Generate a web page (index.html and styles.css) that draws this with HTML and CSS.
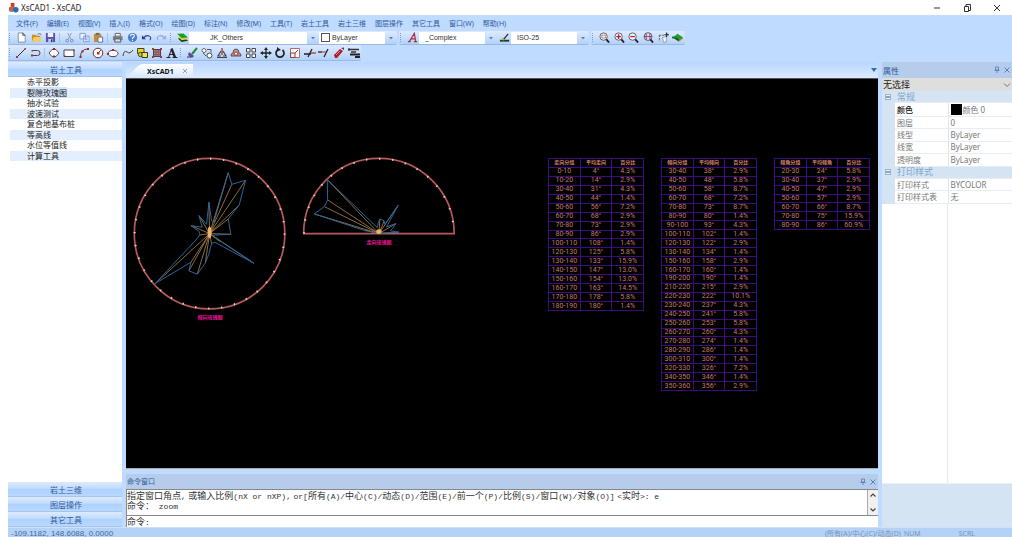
FILE: index.html
```html
<!DOCTYPE html>
<html lang="zh-CN">
<head>
<meta charset="utf-8">
<title>XsCAD1 - XsCAD</title>
<link rel="stylesheet" href="styles.css">
</head>
<body>
<div class="app">
  <header class="titlebar">
    <svg class="logo" viewBox="0 0 12 12"><path d="M3 1h4v5H3z" fill="#c8402c"/><path d="M1 6l4-2 3 3-3 4-4-1z" fill="#d8584a"/><circle cx="8.500" cy="8.500" r="3" fill="#2f68b8"/><path d="M1 9l3-1 2 2-2 1z" fill="#5c9a50"/></svg>
    <h1 class="title">XsCAD1 - XsCAD</h1>
    <div class="winbuttons">
      <button aria-label="最小化"><svg viewBox="0 0 12 12"><path d="M3 6h6" stroke="#333"/></svg></button>
      <button aria-label="还原"><svg viewBox="0 0 12 12"><path d="M3.500 4.500h4v5h-4zM5 4.500v-2h4.500v6H8" fill="none" stroke="#333"/></svg></button>
      <button aria-label="关闭"><svg viewBox="0 0 12 12"><path d="M3 3l6 6M9 3l-6 6" stroke="#333"/></svg></button>
    </div>
  </header>

  <nav class="menu">
    <button>文件(F)</button><button>编辑(E)</button><button>视图(V)</button><button>插入(I)</button><button>格式(O)</button><button>绘图(D)</button><button>标注(N)</button><button>修改(M)</button><button>工具(T)</button><button>岩土工具</button><button>岩土三维</button><button>图层操作</button><button>其它工具</button><button>窗口(W)</button><button>帮助(H)</button>
  </nav>

  <div class="toolrow">
    <div class="toolbar">
      <i class="grip"></i>
      <div class="tools t3">
        <button aria-label="新建"><svg viewBox="0 0 12 12"><path d="M2.500 1h5L10 3.500V11H2.500z" fill="#fff" stroke="#6a7690" stroke-width=".8"/><path d="M7.500 1v2.500H10" fill="none" stroke="#334"/></svg></button>
        <button aria-label="打开"><svg viewBox="0 0 12 12"><path d="M1 3h4l1 1h4v6H1z" fill="#c98f2c"/><path d="M3 5.500h9L10 10.500H1z" fill="#f6cb63"/><path d="M7 2.500l3-1 1 2" fill="none" stroke="#5b7bb5"/></svg></button>
        <button aria-label="保存"><svg viewBox="0 0 12 12"><path d="M1 1h10v10H1z" fill="#5652b4"/><path d="M3 1h6v4.500H3z" fill="#eef0ff"/><path d="M3.500 7.500h5V11h-5z" fill="#c4c8ec"/><path d="M6.500 8h1.500v3H6.500z" fill="#302c80"/></svg></button>
      </div>
      <i class="sep"></i>
      <div class="tools t3">
        <button aria-label="剪切"><svg viewBox="0 0 12 12"><path d="M4 1l3.500 7M8 1L4.500 8" stroke="#8799bb"/><circle cx="3.500" cy="9.500" r="1.500" fill="none" stroke="#7189bd"/><circle cx="8.500" cy="9.500" r="1.500" fill="none" stroke="#7189bd"/></svg></button>
        <button aria-label="复制"><svg viewBox="0 0 12 12"><path d="M1 1.500h6v6H1zM5 4.500h6v6H5z" fill="#eaf2ff" stroke="#7c98cf"/><path d="M6.500 6.500h3M6.500 8.500h3" stroke="#7c98cf"/></svg></button>
        <button aria-label="粘贴"><svg viewBox="0 0 12 12"><path d="M1 2h8v9H1z" fill="#c98d33"/><path d="M3 1h4v2H3z" fill="#665"/><path d="M5.500 5.500h5v5.500h-5z" fill="#fff" stroke="#5c6c9a"/></svg></button>
      </div>
      <i class="sep"></i>
      <div class="tools t4">
        <button aria-label="打印"><svg viewBox="0 0 12 12"><path d="M3.500 1.500h5.500v3H3.500z" fill="#fff" stroke="#555"/><path d="M1 4.500h10.500V9H1z" fill="#7b7f8c"/><path d="M3 7.500h6.500V11H3z" fill="#ddd" stroke="#555"/></svg></button>
        <button aria-label="帮助"><svg viewBox="0 0 12 12"><circle cx="6" cy="6" r="5" fill="#4a7bcc"/><path d="M4 4.500q0-2 2-2t2 1.700Q8 5.500 6 6.500V8M6 8.800v1" fill="none" stroke="#fff" stroke-width="1.200"/></svg></button>
        <button aria-label="撤消"><svg viewBox="0 0 12 12"><path d="M1 3.500V8h4.500z" fill="#223ba5"/><path d="M3 6q3-3 6-1.500T9.500 9" fill="none" stroke="#223ba5" stroke-width="1.200"/></svg></button>
        <button aria-label="重做"><svg viewBox="0 0 12 12"><path d="M11 3.500V8H6.500z" fill="#9ab0dc"/><path d="M9 6Q6 3 3 4.500T2.500 9" fill="none" stroke="#8fa6d8" stroke-width="1.200"/></svg></button>
      </div>
      <i class="grip"></i>
      <div class="tools t1"><button aria-label="图层"><svg viewBox="0 0 12 12"><path d="M1 7l7-1 4 3.500-7 1.500z" fill="#123c1c"/><path d="M1 4.500l7-.5 4 4-7 1z" fill="#d6d634"/><path d="M0 2l7-.5L12 6 5 6.500z" fill="#19a030"/></svg></button></div>
      <label class="combo wide"><select class="layer" aria-label="图层"><option>JK_Others</option></select><svg viewBox="0 0 6 6"><path d="M1 2h4L3 4.500z" fill="#5b7fb8"/></svg></label>
      <label class="combo swatched"><i class="swatch"></i><select aria-label="颜色"><option>ByLayer</option></select><svg viewBox="0 0 6 6"><path d="M1 2h4L3 4.500z" fill="#5b7fb8"/></svg></label>
    </div>
    <div class="toolbar">
      <i class="grip"></i>
      <div class="tools t1"><button aria-label="文字样式"><svg viewBox="0 0 12 12"><path d="M1 10.500h3M7.500 10.500H11M2.500 10.500L8 1.500l1.500 9M4.500 7.500h4.500" fill="none" stroke="#a83248" stroke-width="1.300"/></svg></button></div>
      <label class="combo"><select aria-label="文字样式"><option>_Complex</option></select><svg viewBox="0 0 6 6"><path d="M1 2h4L3 4.500z" fill="#5b7fb8"/></svg></label>
      <div class="tools t1"><button aria-label="标注样式"><svg viewBox="0 0 12 12"><path d="M1 9.500h10" stroke="#123c2c" stroke-width="2"/><path d="M5 8l5-6" stroke="#333" stroke-width="1.500"/><path d="M3 6l3 3H3z" fill="#cabb30"/></svg></button></div>
      <label class="combo"><select aria-label="标注样式"><option>ISO-25</option></select><svg viewBox="0 0 6 6"><path d="M1 2h4L3 4.500z" fill="#5b7fb8"/></svg></label>
    </div>
    <div class="toolbar">
      <i class="grip"></i>
      <div class="tools t6">
        <button aria-label="窗口缩放"><svg viewBox="0 0 12 12"><circle cx="5" cy="5" r="4" fill="#f2f4fb" stroke="#555a6a"/><path d="M8 8l3 3.500" stroke="#222" stroke-width="2"/><path d="M3 3.500h4v3H3z" fill="none" stroke="#a66" stroke-width=".8"/></svg></button>
        <button aria-label="放大"><svg viewBox="0 0 12 12"><circle cx="5" cy="5" r="4" fill="#f2f4fb" stroke="#555a6a"/><path d="M8 8l3 3.500" stroke="#222" stroke-width="2"/><path d="M5 2.500v5M2.500 5h5" stroke="#c01c30" stroke-width="1.400"/></svg></button>
        <button aria-label="缩小"><svg viewBox="0 0 12 12"><circle cx="5" cy="5" r="4" fill="#f2f4fb" stroke="#555a6a"/><path d="M8 8l3 3.500" stroke="#222" stroke-width="2"/><path d="M2.500 5h5" stroke="#c01c30" stroke-width="1.400"/></svg></button>
        <button aria-label="全图"><svg viewBox="0 0 12 12"><circle cx="5.500" cy="5" r="4.300" fill="#d8dcf0" stroke="#555a6a"/><path d="M8 8l3 3.500" stroke="#222" stroke-width="2"/><path d="M3.500 1.500v7M7.500 1.500v7M1 5h9" stroke="#8c4064"/></svg></button>
        <button aria-label="平移"><svg viewBox="0 0 12 12"><path d="M1.500 3.500h6M1.500 3.500V10" fill="none" stroke="#555" stroke-dasharray="2 1"/><path d="M5 6l4-1v6H6z" fill="#fff" stroke="#777" stroke-width=".7"/><path d="M9.500 .500v5M7 3h5" stroke="#223" stroke-width="1.200"/></svg></button>
        <button aria-label="三维"><svg viewBox="0 0 12 12"><path d="M1 6l5-4 6 4-5 4z" fill="#1f9d2c"/><path d="M1 6l6 4v-3z" fill="#115a1c"/><path d="M0 5h4v2H0z" fill="#226b28"/><path d="M7 10l5-4v1l-5 4z" fill="#c56a22"/></svg></button>
      </div>
    </div>
  </div>

  <div class="toolrow second">
    <div class="toolbar">
      <i class="grip"></i>
      <div class="tools t2">
        <button aria-label="直线"><svg viewBox="0 0 12 12"><path d="M2 10l8-8" stroke="#333"/><path d="M1 9h2v2H1zM9.500 1h1.500v1.500H9.500z" fill="#a33"/></svg></button>
        <button aria-label="多段线"><svg viewBox="0 0 12 12"><path d="M2 3.500h5.500a2.500 2.500 0 010 5H2" fill="none" stroke="#444"/><path d="M1 7.500h2v2H1zM1.500 3h1.500v1.500H1.500z" fill="#a33"/></svg></button>
      </div>
      <i class="sep"></i>
      <div class="tools t9">
        <button aria-label="多边形"><svg viewBox="0 0 12 12"><path d="M4 2.500h4L11 6 8 9.500H4L1 6z" fill="#fff" stroke="#555"/><path d="M5 1h2v2H5zM5 8.500h2v2H5z" fill="#a22"/></svg></button>
        <button aria-label="矩形"><svg viewBox="0 0 12 12"><path d="M1 3h10v6.500H1z" fill="#fff" stroke="#444"/><path d="M1 8.500h1.500V10H1zM10 2.500h1.500V4H10z" fill="#a22"/></svg></button>
        <button aria-label="圆弧"><svg viewBox="0 0 12 12"><path d="M2.500 10Q2.500 2 10 2" fill="none" stroke="#444"/><path d="M1.500 9h2v2h-2zM9 1h2v2H9zM3.500 3.500h2v2h-2z" fill="#a22"/></svg></button>
        <button aria-label="圆"><svg viewBox="0 0 12 12"><circle cx="6" cy="6" r="4.800" fill="#fff" stroke="#633"/><path d="M6 6l3-3" stroke="#a22"/><path d="M5 5h2.500v2.500H5z" fill="#c22"/></svg></button>
        <button aria-label="椭圆"><svg viewBox="0 0 12 12"><ellipse cx="6" cy="6.500" rx="5" ry="3.200" fill="#fff" stroke="#444"/><path d="M5 2h2v2H5zM0 6h2v2H0z" fill="#a22"/></svg></button>
        <button aria-label="样条曲线"><svg viewBox="0 0 12 12"><path d="M1 9Q2 2.500 5 5t6-2" fill="none" stroke="#444"/></svg></button>
        <button aria-label="插入块"><svg viewBox="0 0 12 12"><path d="M1.500 1.500h6.500v5H1.500z" fill="#e8d620" stroke="#443"/><circle cx="4.500" cy="7.500" r="2.200" fill="#d8c820" stroke="#443"/><path d="M6 5.500h5.500v5H6z" fill="#f2e450" stroke="#333"/></svg></button>
        <button aria-label="填充"><svg viewBox="0 0 12 12"><path d="M2.500 2.500h7v7h-7z" fill="#a07c86" stroke="#4c3c44"/><path d="M2.500 5h7M2.500 7.500h7M5 2.500v7M7.500 2.500v7" stroke="#844" stroke-width=".6"/><path d="M1 1h2v2H1zM9 1h2v2H9zM1 9h2v2H1zM9 9h2v2H9z" fill="#a34"/></svg></button>
        <button aria-label="文字"><svg viewBox="0 0 12 12"><path d="M.5 10.500h4M6.500 10.500h5M2.500 10.500L5.500 2M3.500 7.500h4" stroke="#222" fill="none"/><path d="M5.500 1.500l3.500 9" stroke="#222" stroke-width="2.300"/></svg></button>
      </div>
      <i class="grip"></i>
      <div class="tools t12">
        <button aria-label="删除"><svg viewBox="0 0 12 12"><path d="M6 7l5-6" stroke="#283" stroke-width="2"/><path d="M3 5l5 4-2 2-4-3z" fill="#5b4a9c"/><path d="M1 10h4" stroke="#333"/></svg></button>
        <button aria-label="复制对象"><svg viewBox="0 0 12 12"><circle cx="3" cy="3.500" r="2" fill="#fff" stroke="#666"/><circle cx="8.500" cy="8.500" r="2.500" fill="#fff" stroke="#444"/><path d="M6 2.500h4v3M2 6l3 3" stroke="#555" fill="none"/></svg></button>
        <button aria-label="镜像"><svg viewBox="0 0 12 12"><path d="M6 1v7M5 4L2 9h3M7 4l3 5H7M1 10.500h10" stroke="#444" stroke-width="1.200" fill="none"/><path d="M5 3h2v5H5z" fill="#b66"/></svg></button>
        <button aria-label="偏移"><svg viewBox="0 0 12 12"><path d="M1 9q0-3 2-3 0-4 3-4t3 4q2 0 2 3z" fill="#d28a96" stroke="#555"/><path d="M4 8q0-3 2-3t2 3z" fill="#fff" stroke="#944"/></svg></button>
        <button aria-label="阵列"><svg viewBox="0 0 12 12"><path d="M1.500 1.500h3.500v3.500H1.500zM7 1.500h3.500v3.500H7zM1.500 7h3.500v3.500H1.500zM7 7h3.500v3.500H7z" fill="#fff" stroke="#444"/></svg></button>
        <button aria-label="移动"><svg viewBox="0 0 12 12"><path d="M6 2v8M2 6h8" stroke="#222" stroke-width="1.300"/><path d="M6 0l2 3H4zM6 12l2-3H4zM0 6l3-2v4zM12 6L9 4v4z" fill="#222"/></svg></button>
        <button aria-label="旋转"><svg viewBox="0 0 12 12"><path d="M8.500 3a4 4 0 11-5 0" fill="none" stroke="#222" stroke-width="1.700"/><path d="M3 0v4.500L7 3z" fill="#222"/></svg></button>
        <button aria-label="缩放"><svg viewBox="0 0 12 12"><path d="M1.500 1.500h9v9h-9z" fill="#fff" stroke="#b66"/><path d="M1.500 6h4.500v4.500H1.500z" fill="#eee" stroke="#844"/><path d="M6 6l3-3" stroke="#844"/></svg></button>
        <button aria-label="修剪"><svg viewBox="0 0 12 12"><path d="M0 7h7M4 10l4-8" stroke="#222" stroke-width="1.300"/><path d="M7 6h5" stroke="#a33" stroke-width="1.300"/></svg></button>
        <button aria-label="延伸"><svg viewBox="0 0 12 12"><path d="M6 10l4-8" stroke="#222" stroke-width="1.300"/><path d="M0 5h4" stroke="#222" stroke-width="1.300"/><path d="M4 5h4" stroke="#a33"/></svg></button>
        <button aria-label="分解"><svg viewBox="0 0 12 12"><path d="M1 8l6-6 3 2-6 7H2z" fill="#b01c24"/><path d="M8 1l3-.5V3z" fill="#444"/><path d="M3 8l4-4" stroke="#e88"/></svg></button>
        <button aria-label="特性匹配"><svg viewBox="0 0 12 12"><path d="M0 2.500h11M3 5h5" stroke="#333" stroke-width="1.500"/><path d="M2 7.500h10M7 10h5" stroke="#222" stroke-width="2"/><path d="M1 1v3" stroke="#333"/></svg></button>
      </div>
    </div>
  </div>

  <main class="workspace">
    <aside class="toolbox">
      <button class="panelbtn">岩土工具</button>
      <ul class="toollist">
        <li>赤平投影</li><li class="alt"><span class="picked">裂隙玫瑰图</span></li><li>抽水试验</li><li class="alt">波速测试</li><li>复合地基布桩</li><li class="alt">等高线</li><li>水位等值线</li><li class="alt">计算工具</li>
      </ul>
      <div class="panelstack">
        <button class="panelbtn">岩土三维</button>
        <button class="panelbtn">图层操作</button>
        <button class="panelbtn">其它工具</button>
      </div>
    </aside>

    <section class="center">
      <div class="tabs">
        <div class="tab"><b>XsCAD1</b><button aria-label="关闭标签"><svg viewBox="0 0 6 6"><path d="M1 1l4 4M5 1L1 5" stroke="#7090c0" stroke-width=".8"/></svg></button></div>
        <button class="tabmenu" aria-label="标签列表"><svg viewBox="0 0 6 6"><path d="M0 1h6L3 5z" fill="#3c68ad"/></svg></button>
      </div>

      <div class="canvas">
        <div class="roses">
          <figure class="rose">
            <svg viewBox="0 0 152 153">
              <g transform="translate(-14 -13) scale(.333)" fill="none">
                <circle cx="269" cy="266" r="226" stroke="#b75a5a" stroke-width="5"/>
                <circle cx="269" cy="266" r="225" stroke="#f0d0c8" stroke-width="6" pathLength="360" stroke-dasharray="1 9"/>
                <path stroke="#a98148" stroke-width="2.500" d="M269 266L325 83M269 266L336 118M269 266L377 106M269 266L358 180M269 266L325 222M269 266L333 268M269 266L402 355M269 266L300 290M269 266L256 355M269 266L232 388M269 266L207 378M269 266L213 352M269 266L106 416M269 266L213 242M269 266L237 212M269 266L267 172M269 266L240 270M269 266L275 296"/>
                <path stroke="#2b659c" stroke-width="3" d="M267 172L275 228 282 232 325 83 336 118 377 106 358 180 325 222 333 268 278 271 300 288 402 355 285 292 275 296 266 330 256 355 232 388 207 378 213 352 106 416 228 285 240 270 238 260 213 242 247 247 237 212 260 238z"/>
                <ellipse cx="269" cy="263" rx="6" ry="18" fill="#ecb36c"/>
              </g>
            </svg>
            <figcaption>倾向玫瑰图</figcaption>
          </figure>
          <figure class="rose">
            <svg viewBox="0 0 152 78">
              <g transform="translate(-13 -13) scale(.333)" fill="none">
                <path d="M41 266a226 226 0 01452 0z" stroke="#b75a5a" stroke-width="5"/>
                <path d="M42 266a225 225 0 01450 0" stroke="#f0d0c8" stroke-width="6" pathLength="180" stroke-dasharray="1 9"/>
                <path stroke="#a98148" stroke-width="2.500" d="M267 266L112 104M267 266L113 165M267 266L103 185M267 266L73 207M267 266L225 256M267 266L270 222M267 266L283 228M267 266L325 181M267 266L318 236M267 266L327 262"/>
                <path stroke="#2b659c" stroke-width="3" d="M267 265L327 262 302 258 318 236 290 246 325 181 285 238 283 228 270 222 265 234 262 248 112 104 113 165 103 185 73 207 225 257z"/>
                <ellipse cx="267" cy="260" rx="8" ry="7" fill="#ecb36c"/>
              </g>
            </svg>
            <figcaption>走向玫瑰图</figcaption>
          </figure>
        </div>
        <div class="stats">
          <table class="stat h17">
            <tr><th>走向分组</th><th>平均走向</th><th>百分比</th></tr>
            <tr><td>0-10</td><td>4°</td><td>4.3%</td></tr>
            <tr><td>10-20</td><td>14°</td><td>2.9%</td></tr>
            <tr><td>30-40</td><td>31°</td><td>4.3%</td></tr>
            <tr><td>40-50</td><td>44°</td><td>1.4%</td></tr>
            <tr><td>50-60</td><td>56°</td><td>7.2%</td></tr>
            <tr><td>60-70</td><td>68°</td><td>2.9%</td></tr>
            <tr><td>70-80</td><td>73°</td><td>2.9%</td></tr>
            <tr><td>80-90</td><td>86°</td><td>2.9%</td></tr>
            <tr><td>100-110</td><td>108°</td><td>1.4%</td></tr>
            <tr><td>120-130</td><td>125°</td><td>5.8%</td></tr>
            <tr><td>130-140</td><td>133°</td><td>15.9%</td></tr>
            <tr><td>140-150</td><td>147°</td><td>13.0%</td></tr>
            <tr><td>150-160</td><td>154°</td><td>13.0%</td></tr>
            <tr><td>160-170</td><td>163°</td><td>14.5%</td></tr>
            <tr><td>170-180</td><td>178°</td><td>5.8%</td></tr>
            <tr><td>180-190</td><td>180°</td><td>1.4%</td></tr>
          </table>
          <table class="stat h26">
            <tr><th>倾向分组</th><th>平均倾向</th><th>百分比</th></tr>
            <tr><td>30-40</td><td>38°</td><td>2.9%</td></tr>
            <tr><td>40-50</td><td>48°</td><td>5.8%</td></tr>
            <tr><td>50-60</td><td>58°</td><td>8.7%</td></tr>
            <tr><td>60-70</td><td>68°</td><td>7.2%</td></tr>
            <tr><td>70-80</td><td>73°</td><td>8.7%</td></tr>
            <tr><td>80-90</td><td>80°</td><td>1.4%</td></tr>
            <tr><td>90-100</td><td>93°</td><td>4.3%</td></tr>
            <tr><td>100-110</td><td>102°</td><td>1.4%</td></tr>
            <tr><td>120-130</td><td>122°</td><td>2.9%</td></tr>
            <tr><td>130-140</td><td>134°</td><td>1.4%</td></tr>
            <tr><td>150-160</td><td>158°</td><td>2.9%</td></tr>
            <tr><td>160-170</td><td>160°</td><td>1.4%</td></tr>
            <tr><td>190-200</td><td>190°</td><td>1.4%</td></tr>
            <tr><td>210-220</td><td>215°</td><td>2.9%</td></tr>
            <tr><td>220-230</td><td>222°</td><td>10.1%</td></tr>
            <tr><td>230-240</td><td>237°</td><td>4.3%</td></tr>
            <tr><td>240-250</td><td>241°</td><td>5.8%</td></tr>
            <tr><td>250-260</td><td>253°</td><td>5.8%</td></tr>
            <tr><td>260-270</td><td>260°</td><td>4.3%</td></tr>
            <tr><td>270-280</td><td>274°</td><td>1.4%</td></tr>
            <tr><td>280-290</td><td>286°</td><td>1.4%</td></tr>
            <tr><td>300-310</td><td>300°</td><td>1.4%</td></tr>
            <tr><td>320-330</td><td>326°</td><td>7.2%</td></tr>
            <tr><td>340-350</td><td>346°</td><td>1.4%</td></tr>
            <tr><td>350-360</td><td>356°</td><td>2.9%</td></tr>
          </table>
          <table class="stat h8">
            <tr><th>倾角分组</th><th>平均倾角</th><th>百分比</th></tr>
            <tr><td>20-30</td><td>24°</td><td>5.8%</td></tr>
            <tr><td>30-40</td><td>37°</td><td>2.9%</td></tr>
            <tr><td>40-50</td><td>47°</td><td>2.9%</td></tr>
            <tr><td>50-60</td><td>57°</td><td>2.9%</td></tr>
            <tr><td>60-70</td><td>66°</td><td>8.7%</td></tr>
            <tr><td>70-80</td><td>75°</td><td>15.9%</td></tr>
            <tr><td>80-90</td><td>86°</td><td>60.9%</td></tr>
          </table>
        </div>
      </div>

      <div class="command">
        <div class="panelhead"><h2>命令窗口</h2><button aria-label="固定"><svg viewBox="0 0 8 8"><path d="M2.500 1h3v3h-3zM1.500 4.500h5M4 4.500V7" fill="none" stroke="#5a7fbc" stroke-width=".9"/></svg></button><button aria-label="关闭"><svg viewBox="0 0 8 8"><path d="M1.500 1.500l5 5M6.500 1.500l-5 5" stroke="#5a7fbc"/></svg></button></div>
        <div class="history">
          <div class="log">
            <p>指定窗口角点<code>,</code> 或输入比例<code>(nX or nXP),</code> <code>or[</code>所有<code>(A)/</code>中心<code>(C)/</code>动态<code>(D)/</code>范围<code>(E)/</code>前一个<code>(P)/</code>比例<code>(S)/</code>窗口<code>(W)/</code>对象<code>(O)]</code> <code>&lt;</code>实时<code>&gt;: e</code></p>
            <p>命令：<code> zoom</code></p>
          </div>
          <div class="scroll">
            <button aria-label="向上"><svg viewBox="0 0 8 8"><path d="M1.500 5.500L4 3l2.500 2.500" fill="none" stroke="#444" stroke-width="1.200"/></svg></button>
            <button aria-label="向下"><svg viewBox="0 0 8 8"><path d="M1.500 2.500L4 5l2.500-2.500" fill="none" stroke="#444" stroke-width="1.200"/></svg></button>
          </div>
        </div>
        <div class="prompt"><label for="cmd">命令<code>:</code></label><input id="cmd" type="text"></div>
      </div>
    </section>

    <aside class="props">
      <div class="panelhead"><h2>属性</h2><button aria-label="固定"><svg viewBox="0 0 8 8"><path d="M2.500 1h3v3h-3zM1.500 4.500h5M4 4.500V7" fill="none" stroke="#5a7fbc" stroke-width=".9"/></svg></button><button aria-label="关闭"><svg viewBox="0 0 8 8"><path d="M1.500 1.500l5 5M6.500 1.500l-5 5" stroke="#5a7fbc"/></svg></button></div>
      <label class="selection"><select aria-label="选择"><option>无选择</option></select><svg viewBox="0 0 8 8"><path d="M1 2.500l3 3 3-3" fill="none" stroke="#666" stroke-width=".9"/></svg></label>
      <table class="proptable">
        <colgroup><col class="c-fold"><col class="c-name"><col></colgroup>
        <tr class="group"><td><i class="fold"></i></td><th colspan="2">常规</th></tr>
        <tr class="active"><td></td><th>颜色</th><td><span class="color"><i class="black"></i>颜色 0</span></td></tr>
        <tr><td></td><th>图层</th><td>0</td></tr>
        <tr><td></td><th>线型</th><td>ByLayer</td></tr>
        <tr><td></td><th>线宽</th><td>ByLayer</td></tr>
        <tr><td></td><th>透明度</th><td>ByLayer</td></tr>
        <tr class="group"><td><i class="fold"></i></td><th colspan="2">打印样式</th></tr>
        <tr><td></td><th>打印样式</th><td>BYCOLOR</td></tr>
        <tr><td></td><th>打印样式表</th><td>无</td></tr>
      </table>
      <div class="blank"></div>
      <div class="hint"></div>
    </aside>
  </main>

  <footer class="status">
    <span class="coords">-109.1182, 148.6088, 0.0000</span>
    <span>(所有(A)/中心(C)/动态(D)</span>
    <span class="num">NUM</span>
    <span class="scrl">SCRL</span>
  </footer>
</div>
</body>
</html>
```
FILE: styles.css
```css
* { box-sizing: border-box; }

body {
  margin: 0;
  padding-left: 8px;
  background: #fff;
  color: #333;
  font: 7px/9px "Noto Sans", "Noto Sans CJK SC", sans-serif;
}

button {
  margin: 0;
  padding: 0;
  border: 0;
  background: none;
  color: inherit;
  font: inherit;
}

svg { display: block; }
h1, h2, p, ul, figure { margin: 0; padding: 0; }
select, input { border: 0; padding: 0; margin: 0; outline: 0; border-radius: 0; font: inherit; appearance: none; }

.app {
  display: flex;
  flex-direction: column;
  height: 100vh;
  background: #bfdbff;
}

/* Title bar and menu */
.titlebar { display: flex; align-items: center; height: 15px; background: #fff; }
.logo { width: 11px; height: 11px; }
.title { flex: 1; padding-left: 2px; font-size: 8px; font-weight: 400; line-height: 12px; color: #222; }
.winbuttons { display: flex; gap: 18px; padding-right: 9px; }
.winbuttons svg { width: 12px; height: 12px; }

.menu { display: flex; gap: 9px; height: 16px; padding-left: 8px; align-items: center; color: #31599a; }

/* Toolbars */
.toolrow { display: flex; gap: 2px; height: 14px; }
.toolrow.second { height: 17px; padding-bottom: 1px; }
.toolbar {
  display: flex;
  align-items: center;
  background: linear-gradient(#dceaff, #c4dcfb 60%, #b4d0f8);
  border-bottom: 1px solid #98b9e8;
  border-radius: 2px;
}
.grip { width: 5px; height: 9px; border-left: 1px dotted #7f9fd0; margin-left: 1px; }
.sep { width: 1px; height: 10px; margin: 0 2px 0 1px; background: #a5c2ea; }
.tools { display: flex; }
.tools button { flex: 1; display: flex; justify-content: center; }
.tools svg { width: 11px; height: 11px; }
.second .tools svg { width: 12px; height: 12px; }
.t1 { width: 14px; }
.t2 { width: 29px; }
.t3 { width: 44px; }
.t4 { width: 59px; }
.t6 { width: 88px; }
.t9 { width: 132px; }
.t12 { width: 176px; }

.combo { display: flex; align-items: center; width: 78px; height: 12px; padding-right: 3px; font-family: "Liberation Sans", sans-serif; }
.combo.wide { width: 130px; }
.combo select { flex: 1; min-width: 0; height: 12px; margin-right: 3px; padding-left: 6px; background: #fff; color: #333; }
.combo .layer { padding-left: 21px; }
.combo svg { width: 6px; height: 6px; }
.combo.swatched { background: linear-gradient(90deg, #fff 66px, transparent 66px); }
.combo.swatched select { padding-left: 2px; }
.swatch { width: 9px; height: 9px; margin-left: 2px; border: 1px solid #555; background: #fff; }

/* Workspace */
.workspace { flex: 1; min-height: 0; display: grid; grid-template-columns: 114px 1fr 131px; }

.toolbox { display: flex; flex-direction: column; background: #fff; min-height: 0; }
.panelbtn {
  width: 100%;
  height: 15px;
  padding-left: 2px;
  color: #31599a;
  font-size: 8px;
  background: linear-gradient(#dceaff, #c3dcff 45%, #aed1ff 50%, #b9d8ff);
  border-bottom: 1px solid #a4c5f0;
}
.toollist { flex: none; height: 84px; display: flex; flex-direction: column; padding-left: 2px; list-style: none; font-size: 8px; line-height: 10px; }
.toollist li { flex: 1; padding-left: 17px; color: #222; }
.toollist .alt { background: #e3efff; }
.picked { background: #d0e3f8; }
.panelstack { display: flex; flex-direction: column; margin-top: auto; }

.center { display: flex; flex-direction: column; min-width: 0; padding: 0 3px 0 4px; }
.tabs { display: flex; align-items: flex-end; justify-content: space-between; height: 16px; background: linear-gradient(#b8d6ff, #dceaff); }
.tab {
  display: flex;
  align-items: center;
  justify-content: space-between;
  width: 67px;
  height: 14px;
  padding: 0 5px 0 21px;
  background: linear-gradient(#fff, #e8f1fe 60%, #d4e5fd);
  clip-path: polygon(0 100%, 12px 15%, 16px 0, 100% 0, 100% 100%);
  color: #111;
}
.tab svg { width: 6px; height: 6px; }
.tabmenu { padding: 0 1px 5px 0; }
.tabmenu svg { width: 6px; height: 6px; }

.canvas {
  flex: 1;
  min-height: 0;
  display: flex;
  justify-content: space-between;
  padding: 79px 8px 0 8px;
  background: #000;
  border-top: 1px solid #555;
  border-bottom: 1px solid #a9a9a9;
}
.roses { display: flex; gap: 17px; align-items: flex-start; }
.rose { width: 152px; }
.rose svg { width: 100%; overflow: visible; }
.rose figcaption { padding-top: 2px; text-align: center; color: #f0149a; font-size: 5px; font-weight: 700; line-height: 8px; }

.stats { display: flex; gap: 17px; align-items: flex-start; }
.stat { width: 96px; border-collapse: collapse; table-layout: fixed; color: #c27a68; font: 7px/7px Roboto, "Noto Sans CJK SC", sans-serif; text-align: center; }
.stat th, .stat td { padding: 0; border: 1px solid #3d0a80; }
.stat th { font-size: 5px; font-weight: 700; color: #d98472; }
.h17 { height: 153px; }
.h26 { height: 233px; }
.h8 { height: 72px; }

/* Panel headings */
.panelhead { display: flex; align-items: center; height: 15px; padding-right: 1px; background: #b5cdea; color: #31599a; }
.panelhead h2 { flex: 1; padding-left: 1px; font-size: 7px; font-weight: 400; }
.panelhead button + button { margin-left: 2px; }
.panelhead svg { width: 8px; height: 8px; }

/* Command window */
.command { padding-top: 5px; }
.command code { font: 8px/9px "Liberation Mono", monospace; white-space: pre; }
.history { display: flex; height: 27px; background: #fff; border: 1px solid #888; border-width: 1px 0 1px 1px; }
.log { flex: 1; min-width: 0; padding-top: 1px; font: 9px/10px "Liberation Sans", "Noto Sans CJK SC", sans-serif; white-space: nowrap; border-right: 1px solid #aaa; }
.scroll { display: flex; flex-direction: column; justify-content: space-between; padding: 1px; background: #f0f0f0; }
.scroll svg { width: 8px; height: 8px; }
.prompt { display: flex; align-items: center; height: 11px; background: #fff; border-left: 1px solid #888; font: 9px/10px "Liberation Sans", "Noto Sans CJK SC", sans-serif; }
.prompt input { flex: 1; height: 10px; background: transparent; }

/* Properties */
.props { display: flex; flex-direction: column; padding-left: 1px; min-height: 0; font-size: 8px; }
.props .panelhead { flex: none; height: 16px; }
.props .panelhead h2 { font-size: 8px; }
.selection { display: flex; align-items: center; height: 13px; padding: 0 1px; background: #dedede; }
.selection select { flex: 1; background: transparent; color: #222; font-size: 9px; }
.selection svg { width: 8px; height: 8px; }
.proptable { height: 113px; border-collapse: collapse; table-layout: fixed; width: 100%; background: #fff; color: #777; line-height: 10px; }
.proptable td, .proptable th { padding: 0 0 0 2px; border-bottom: 1px solid #e6edf5; text-align: left; font-weight: 400; white-space: nowrap; }
.proptable td:first-child { background: #d5e4f3; border: 0; }
.proptable tr:not(.group) th { border-right: 1px solid #dde6f0; }
.c-fold { width: 13px; }
.c-name { width: 53px; }
.proptable .group th { background: #d5e4f3; color: #7fa6d0; font-size: 9px; }
.proptable .active th { color: #111; font-weight: 500; }
.color { display: flex; align-items: center; }
.black { width: 11px; height: 11px; background: #000; margin-right: 1px; }
.fold { display: block; width: 6px; height: 6px; margin-left: 1px; border: 1px solid #9db4cf; background: linear-gradient(transparent 1px, #8aa4c4 1px, #8aa4c4 3px, transparent 3px) #eaf1f9; }
.blank { flex: 1; background: linear-gradient(90deg, #fff 65px, #e3eaf2 65px, #e3eaf2 66px, #fff 66px); }
.hint { flex: none; height: 44px; background: #d5e4f3; border-top: 1px solid #e8f0f9; }

/* Status bar */
.status { display: flex; align-items: center; height: 10px; padding: 1px 37px 0 3px; line-height: 9px; background: #b4d1f6; border-top: 1px solid #cfe1fa; color: #7f93b0; }
.coords { flex: 1; color: #45699f; font: 8px/9px "Liberation Sans", sans-serif; }
.num { padding-left: 3px; }
.scrl { padding-left: 38px; }
```
